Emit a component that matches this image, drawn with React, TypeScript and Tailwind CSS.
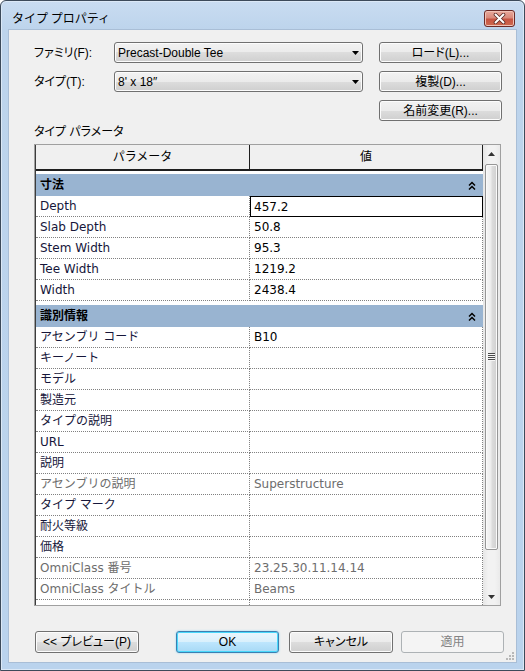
import React from "react";

const uiFont =
  "font-['Liberation_Sans','Noto_Sans_CJK_JP',sans-serif] [font-feature-settings:'palt']";
const gridFont = "font-['DejaVu_Sans','Noto_Sans_CJK_JP',sans-serif]";

const btnNormal =
  "rounded-[3px] border border-[#707070] bg-[linear-gradient(to_bottom,#f2f2f2_0%,#ebebeb_50%,#dddddd_50%,#cfcfcf_100%)] shadow-[inset_0_0_0_1px_#fcfcfc] text-black";
const btnDefault =
  "rounded-[3px] border border-[#3c7fb1] bg-[linear-gradient(to_bottom,#eaf6fd_0%,#d9f0fc_50%,#bee6fd_50%,#a7d9f5_100%)] shadow-[inset_0_0_0_1px_#48d8fb,0_0_2px_#7ed3f7] text-black";
const btnDisabled =
  "rounded-[3px] border border-[#adb2b5] bg-[#f4f4f4] text-[#838383]";

function Btn({
  children,
  kind = "normal",
  className = "",
}: {
  children: React.ReactNode;
  kind?: "normal" | "default" | "disabled";
  className?: string;
}) {
  const k = kind === "default" ? btnDefault : kind === "disabled" ? btnDisabled : btnNormal;
  return (
    <div className={`${k} ${uiFont} flex items-center justify-center text-[12px] leading-none ${className}`}>
      {children}
    </div>
  );
}

function Combo({ text }: { text: string }) {
  return (
    <div
      className={`h-[21px] ${btnNormal} flex items-center pl-[3px] pr-[3px] ${uiFont} text-[12px] leading-none`}
    >
      <span className="flex-1">{text}</span>
      <svg width="7" height="4" viewBox="0 0 7 4">
        <path d="M0 0H7L3.5 4Z" fill="#000" />
      </svg>
    </div>
  );
}

function Collapse() {
  return (
    <svg width="8" height="9" viewBox="0 0 8 9">
      <path d="M1 4.5L4 1.5L7 4.5" fill="none" stroke="#000" strokeWidth="1.5" />
      <path d="M1 8.5L4 5.5L7 8.5" fill="none" stroke="#000" strokeWidth="1.5" />
    </svg>
  );
}

function Group({ title }: { title: string }) {
  return (
    <div className="h-[22px] bg-[#99b4d1] flex items-center pl-[4px] pr-[7px] text-[12px] font-bold text-black">
      <span className="flex-1">{title}</span>
      <Collapse />
    </div>
  );
}

type RowData = { label: string; value?: string; gray?: boolean; selected?: boolean };

function Row({ label, value = "", gray, selected }: RowData) {
  const color = gray ? "text-[#6d6d6d]" : "text-[#16163a]";
  return (
    <div className="flex h-[21px] text-[12px]">
      <div
        className={`w-[214px] h-full flex items-center pl-[4px] border-r border-b border-dotted border-[#808080] ${color} whitespace-nowrap`}
      >
        {label}
      </div>
      {selected ? (
        <div className="w-[233px] h-full flex items-center pl-[3px] border border-black text-black">
          {value}
        </div>
      ) : (
        <div
          className={`w-[233px] h-full flex items-center pl-[4px] border-r border-b border-dotted border-[#808080] ${
            gray ? "text-[#6d6d6d]" : "text-black"
          }`}
        >
          {value}
        </div>
      )}
    </div>
  );
}

const dims: RowData[] = [
  { label: "Depth", value: "457.2", selected: true },
  { label: "Slab Depth", value: "50.8" },
  { label: "Stem Width", value: "95.3" },
  { label: "Tee Width", value: "1219.2" },
  { label: "Width", value: "2438.4" },
];

const ident: RowData[] = [
  { label: "アセンブリ コード", value: "B10" },
  { label: "キーノート" },
  { label: "モデル" },
  { label: "製造元" },
  { label: "タイプの説明" },
  { label: "URL" },
  { label: "説明" },
  { label: "アセンブリの説明", value: "Superstructure", gray: true },
  { label: "タイプ マーク" },
  { label: "耐火等級" },
  { label: "価格" },
  { label: "OmniClass 番号", value: "23.25.30.11.14.14", gray: true },
  { label: "OmniClass タイトル", value: "Beams", gray: true },
];

function Scrollbar() {
  return (
    <div className="w-[17px] h-full flex flex-col bg-[linear-gradient(to_right,#e6e6e6,#f2f2f2_30%,#f2f2f2_70%,#eaeaea)]">
      <div className="h-[17px] flex items-center justify-center">
        <svg width="7" height="4" viewBox="0 0 7 4">
          <path d="M0 4H7L3.5 0Z" fill="#333" />
        </svg>
      </div>
      <div className="mt-[2px] ml-[2px] w-[13px] h-[386px] rounded-[2px] border border-[#969696] bg-[linear-gradient(to_right,#f7f7f7,#ececec_45%,#dcdcdc_55%,#d0d0d0)] shadow-[inset_0_0_0_1px_#fafafa] flex items-center justify-center">
        <svg width="7" height="8" viewBox="0 0 7 8">
          <path d="M0 0.5H7M0 2.5H7M0 4.5H7M0 6.5H7" stroke="#4a4a4a" strokeWidth="1" />
          <path d="M0 1.5H7M0 3.5H7M0 5.5H7M0 7.5H7" stroke="#f6f6f6" strokeWidth="1" />
        </svg>
      </div>
      <div className="flex-1" />
      <div className="h-[17px] flex items-center justify-center">
        <svg width="7" height="4" viewBox="0 0 7 4">
          <path d="M0 0H7L3.5 4Z" fill="#333" />
        </svg>
      </div>
    </div>
  );
}

function CloseBtn() {
  return (
    <div className="ml-auto w-[31px] h-[17px] rounded-[3px] border border-[#6b2a26] bg-[linear-gradient(to_bottom,#e9a99c_0%,#d98a7b_45%,#c75442_55%,#cd6a4f_100%)] shadow-[inset_0_0_0_1px_#f0c2b6] flex items-center justify-center">
      <svg width="13" height="11" viewBox="0 0 13 11">
        <path d="M2.5 1.5L10.5 9.5M10.5 1.5L2.5 9.5" stroke="#5a2a24" strokeWidth="3.6" strokeLinecap="round" />
        <path d="M2.5 1.5L10.5 9.5M10.5 1.5L2.5 9.5" stroke="#ffffff" strokeWidth="2" strokeLinecap="round" />
      </svg>
    </div>
  );
}

export default function App() {
  return (
    <div className="w-[525px] h-[671px] bg-white">
      <div className="relative w-[525px] h-[671px] rounded-t-[6px] border border-[#3c4a5a] bg-[linear-gradient(to_bottom,#c9dcf1_0px,#bdd4ec_28px,#bad3ed_100%)] shadow-[inset_0_0_0_1px_#dbe8f6] flex flex-col">
        <div className="h-[28px] shrink-0 flex items-center pt-[6px] pl-[11px] pr-[9px]">
          <span className="text-[12px] leading-none text-black font-['Noto_Sans_CJK_JP',sans-serif]">
            タイプ プロパティ
          </span>
          <CloseBtn />
        </div>
        <div className="relative ml-[7px] w-[509px] h-[634px] bg-[#f0f0f0] border border-[#a9bed6] flex flex-col">
          <div className="mt-[12px] ml-[25px] grid grid-cols-[64px_249px_123px] grid-rows-[21px_21px_21px] gap-x-[16px] gap-y-[8px]">
            <div className={`${uiFont} text-[12px] leading-none flex items-center text-black`}>ファミリ(F):</div>
            <Combo text="Precast-Double Tee" />
            <Btn className="h-[21px]">ロード(L)...</Btn>
            <div className={`${uiFont} text-[12px] leading-none flex items-center text-black`}>タイプ(T):</div>
            <Combo text={"8' x 18\u2033"} />
            <Btn className="h-[21px]">複製(D)...</Btn>
            <div />
            <div />
            <Btn className="h-[21px]">名前変更(R)...</Btn>
          </div>
          <div className={`mt-[3px] ml-[25px] h-[16px] flex items-center ${uiFont} text-[12px] leading-none text-black`}>
            タイプ パラメータ
          </div>
          <div className={`mt-[4px] ml-[25px] w-[467px] h-[462px] border border-[#a0a0a0] bg-white flex ${gridFont}`}>
            <div className="w-[448px] h-full border-l border-[#3c3c3c] flex flex-col">
              <div className="h-[26px] flex border-b-2 border-[#1e1e1e] bg-[#f0f0f0] text-[12px] text-black">
                <div className="w-[214px] h-full border-r border-[#1e1e1e] flex items-center justify-center">
                  パラメータ
                </div>
                <div className="w-[233px] h-full border-r border-[#1e1e1e] flex items-center justify-center">
                  値
                </div>
              </div>
              <div className="h-[3px]" />
              <Group title="寸法" />
              {dims.map((r) => (
                <Row key={r.label} {...r} />
              ))}
              <div className="h-[4px]" />
              <Group title="識別情報" />
              {ident.map((r) => (
                <Row key={r.label} {...r} />
              ))}
              <div className="flex h-[5px]">
                <div className="w-[214px] h-full border-r border-dotted border-[#808080]" />
                <div className="w-[233px] h-full border-r border-dotted border-[#808080]" />
              </div>
            </div>
            <Scrollbar />
          </div>
          <div className="mt-[25px] ml-[26px] flex">
            <Btn className="w-[104px] h-[22px]">{"<< プレビュー(P)"}</Btn>
            <Btn kind="default" className="ml-[37px] w-[103px] h-[22px]">OK</Btn>
            <Btn className="ml-[10px] w-[104px] h-[22px]">キャンセル</Btn>
            <Btn kind="disabled" className="ml-[8px] w-[103px] h-[22px]">適用</Btn>
          </div>
          <svg className="absolute right-[1px] bottom-[1px]" width="10" height="10" viewBox="0 0 10 10">
            <rect x="7" y="1" width="2" height="2" fill="#b8b8b8" />
            <rect x="4" y="4" width="2" height="2" fill="#b8b8b8" />
            <rect x="7" y="4" width="2" height="2" fill="#b8b8b8" />
            <rect x="1" y="7" width="2" height="2" fill="#b8b8b8" />
            <rect x="4" y="7" width="2" height="2" fill="#b8b8b8" />
            <rect x="7" y="7" width="2" height="2" fill="#b8b8b8" />
          </svg>
        </div>
      </div>
    </div>
  );
}
